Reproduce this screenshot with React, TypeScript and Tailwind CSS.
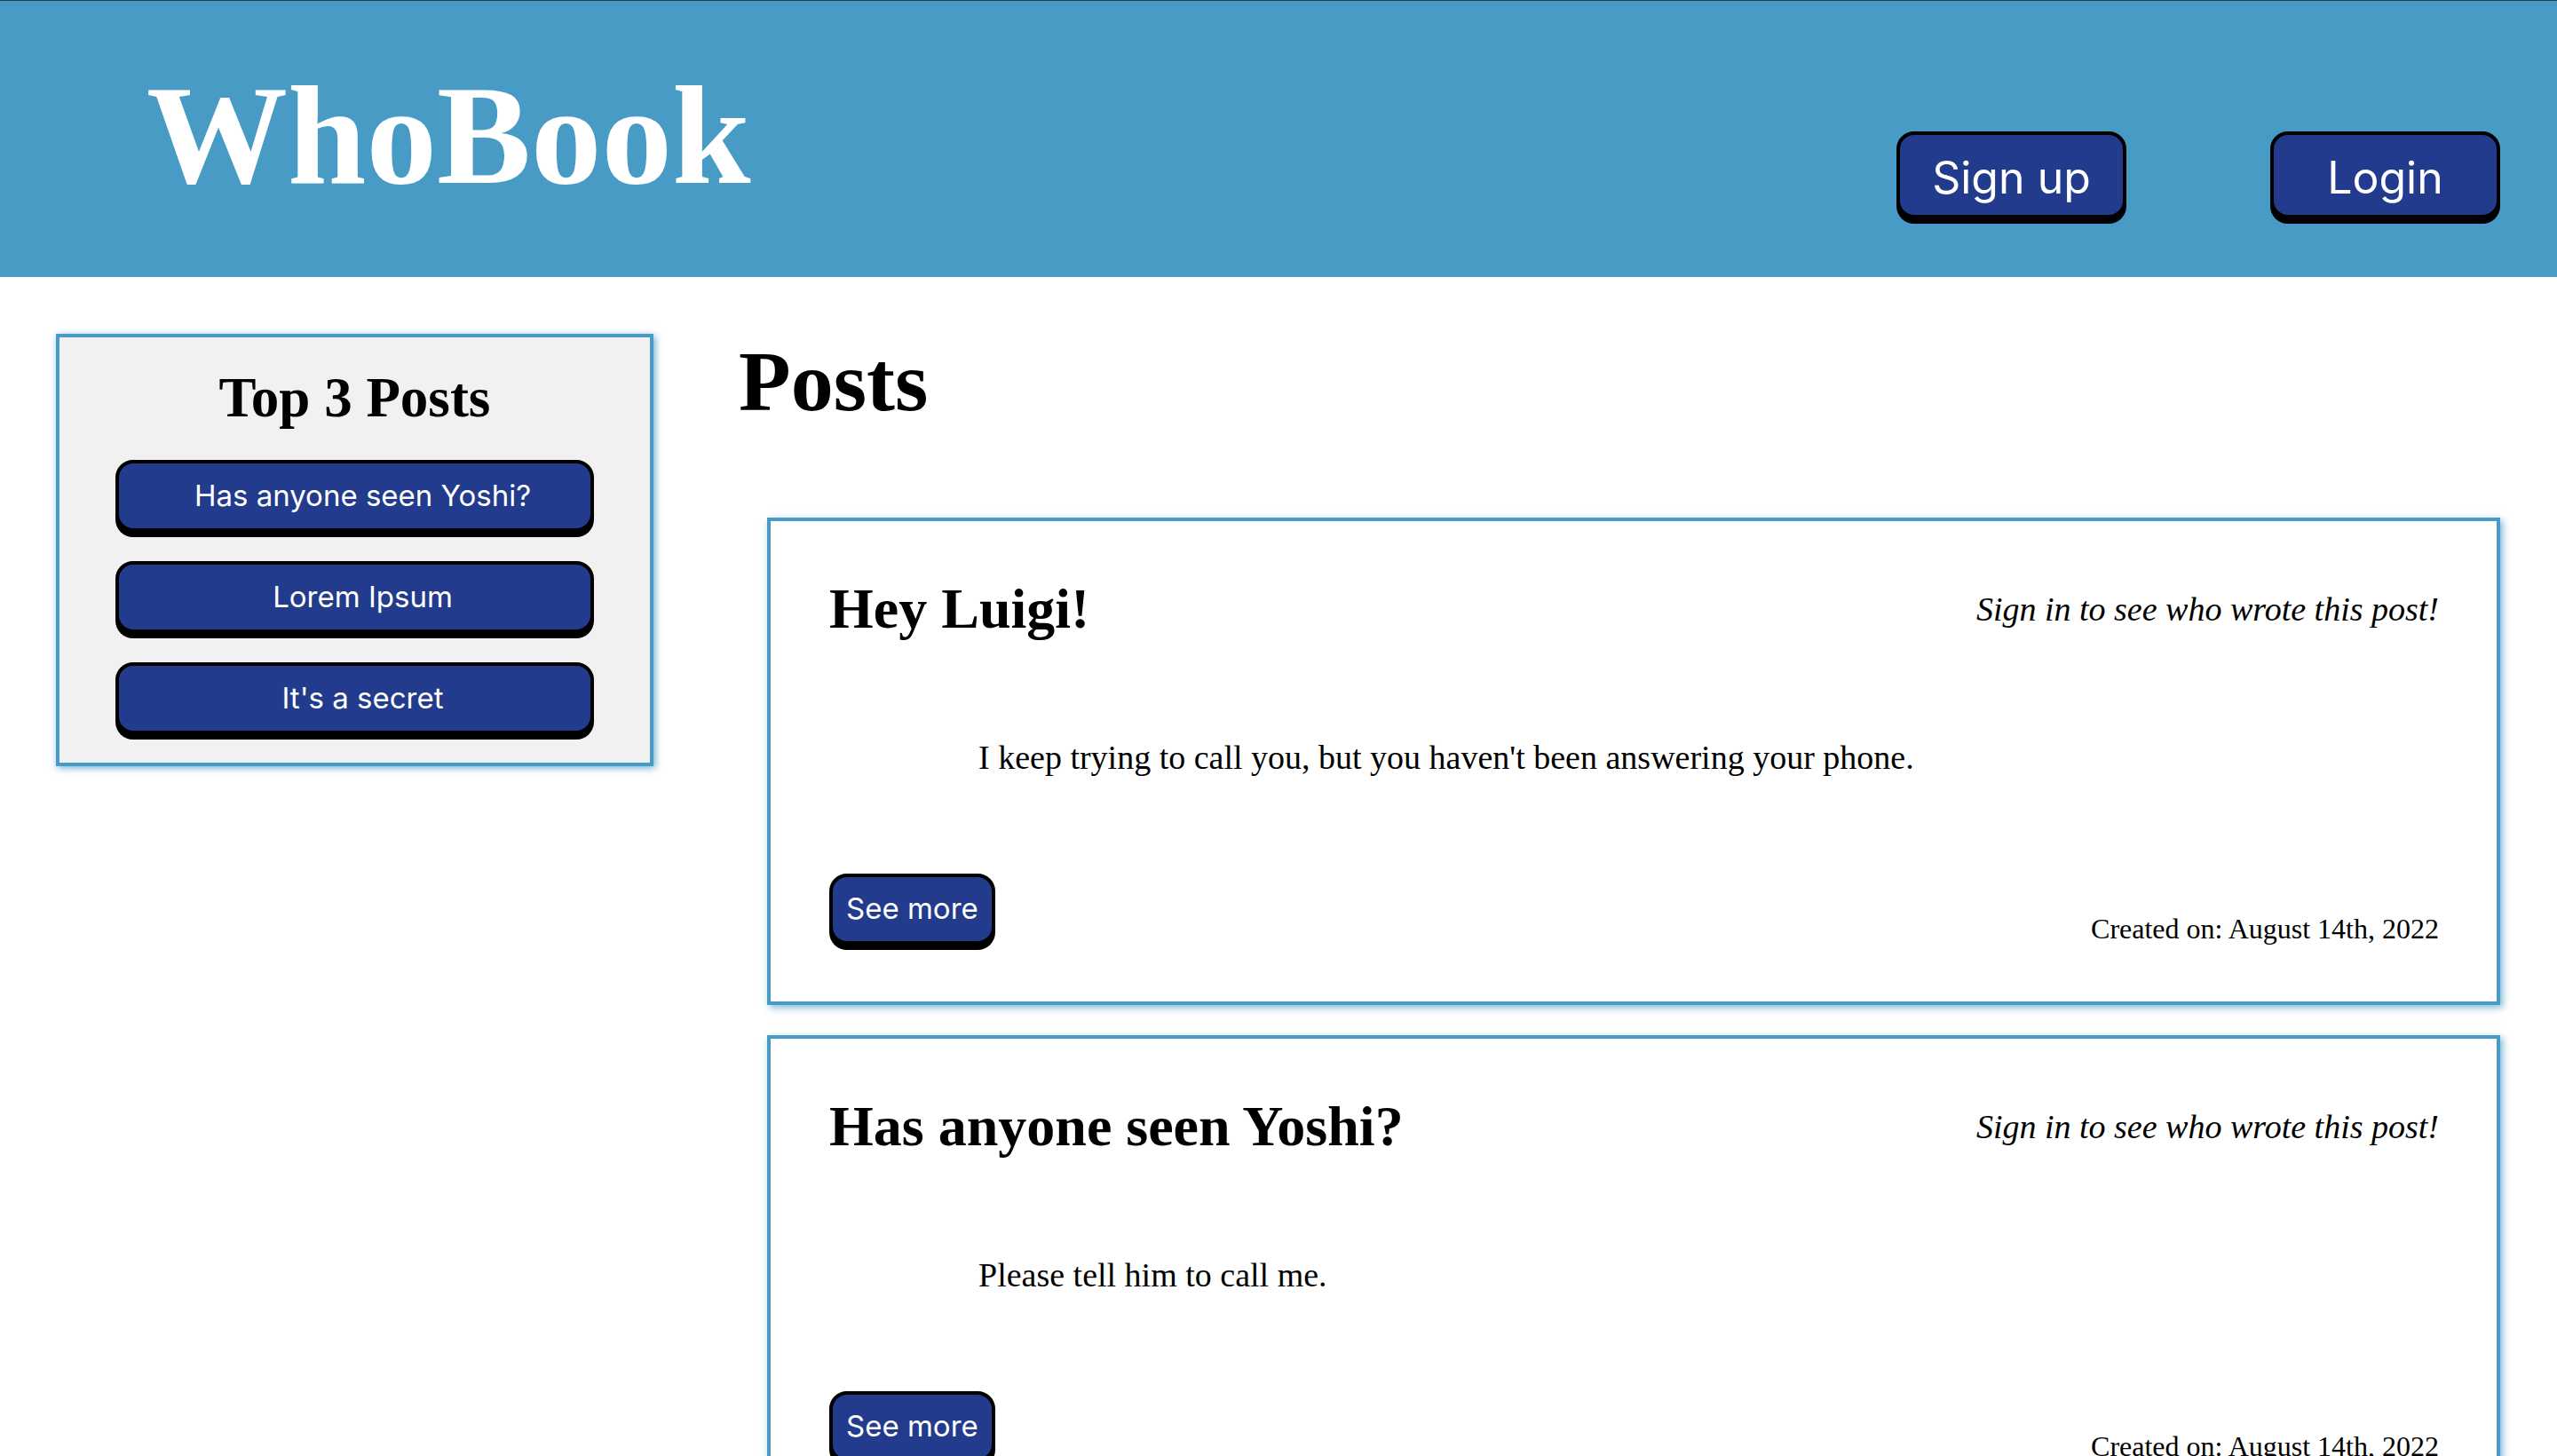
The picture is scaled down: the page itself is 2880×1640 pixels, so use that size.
import React from "react";

interface Post {
  id: number;
  title: string;
  body: string;
  created: string;
}

const posts: Post[] = [
  {
    id: 1,
    title: "Hey Luigi!",
    body: "I keep trying to call you, but you haven't been answering your phone.",
    created: "August 14th, 2022",
  },
  {
    id: 2,
    title: "Has anyone seen Yoshi?",
    body: "Please tell him to call me.",
    created: "August 14th, 2022",
  },
  {
    id: 3,
    title: "Lorem Ipsum",
    body: "Lorem ipsum dolor sit amet, consectetur adipiscing elit.",
    created: "August 14th, 2022",
  },
];

const topPosts = ["Has anyone seen Yoshi?", "Lorem Ipsum", "It's a secret"];

const btn =
  "bg-[#223b8c] text-white border-4 border-black rounded-[20px] shadow-[0_6px_0_#000] font-['Inter',sans-serif] flex items-center justify-center";

const Header: React.FC = () => (
  <header className="h-[312px] bg-[#479bc5] border-t border-[#2b3a44] flex items-start justify-between pl-[165px] pr-[64px]">
    <h1 className="mt-[72px] text-[159px] leading-none font-bold text-white">WhoBook</h1>
    <nav className="mt-[147px] flex gap-[162px]">
      <button className={`${btn} w-[259px] h-[98px] pt-[6px] text-[50px]`}>Sign up</button>
      <button className={`${btn} w-[259px] h-[98px] pt-[6px] text-[50px]`}>Login</button>
    </nav>
  </header>
);

const Sidebar: React.FC = () => (
  <aside className="w-[673px] shrink-0 bg-[#f1f1f1] border-4 border-[#479bc5] shadow-[2px_2px_8px_rgba(71,155,197,0.8)] pt-[37px] pb-[32px] flex flex-col items-center">
    <h2 className="text-[63px] leading-none font-bold text-black">Top 3 Posts</h2>
    <div className="mt-[38px] flex flex-col gap-[33px]">
      {topPosts.map((t) => (
        <button key={t} className={`${btn} w-[539px] h-[81px] pl-[18px] text-[33px] rounded-[18px]`}>
          {t}
        </button>
      ))}
    </div>
  </aside>
);

const PostCard: React.FC<{ post: Post }> = ({ post }) => (
  <article className="border-4 border-[#479bc5] bg-white shadow-[3px_3px_8px_rgba(71,155,197,0.7)] pl-[66px] pr-[65px] pt-[67px] pb-[64px]">
    <div className="flex items-center justify-between">
      <h3 className="text-[64px] leading-none font-bold text-black">{post.title}</h3>
      <p className="text-[38px] leading-none italic text-black">Sign in to see who wrote this post!</p>
    </div>
    <p className="mt-[116px] pl-[168px] text-[38px] leading-none text-black">{post.body}</p>
    <div className="mt-[112px] flex items-end justify-between">
      <button className={`${btn} h-[80px] px-[15px] text-[33px] rounded-[16px]`}>See more</button>
      <p className="text-[32px] leading-none text-black mb-[2px]">Created on: {post.created}</p>
    </div>
  </article>
);

export default function App() {
  return (
    <div className="min-h-screen bg-white font-['Liberation_Serif',serif]">
      <Header />
      <main className="flex items-start gap-[96px] pl-[63px] pr-[64px] pt-[64px]">
        <Sidebar />
        <section className="flex-1">
          <h2 className="mt-[6px] text-[96px] leading-none font-bold text-black">Posts</h2>
          <div className="mt-[105px] ml-[32px] flex flex-col gap-[34px] pb-[40px]">
            {posts.map((p) => (
              <PostCard key={p.id} post={p} />
            ))}
          </div>
        </section>
      </main>
    </div>
  );
}
